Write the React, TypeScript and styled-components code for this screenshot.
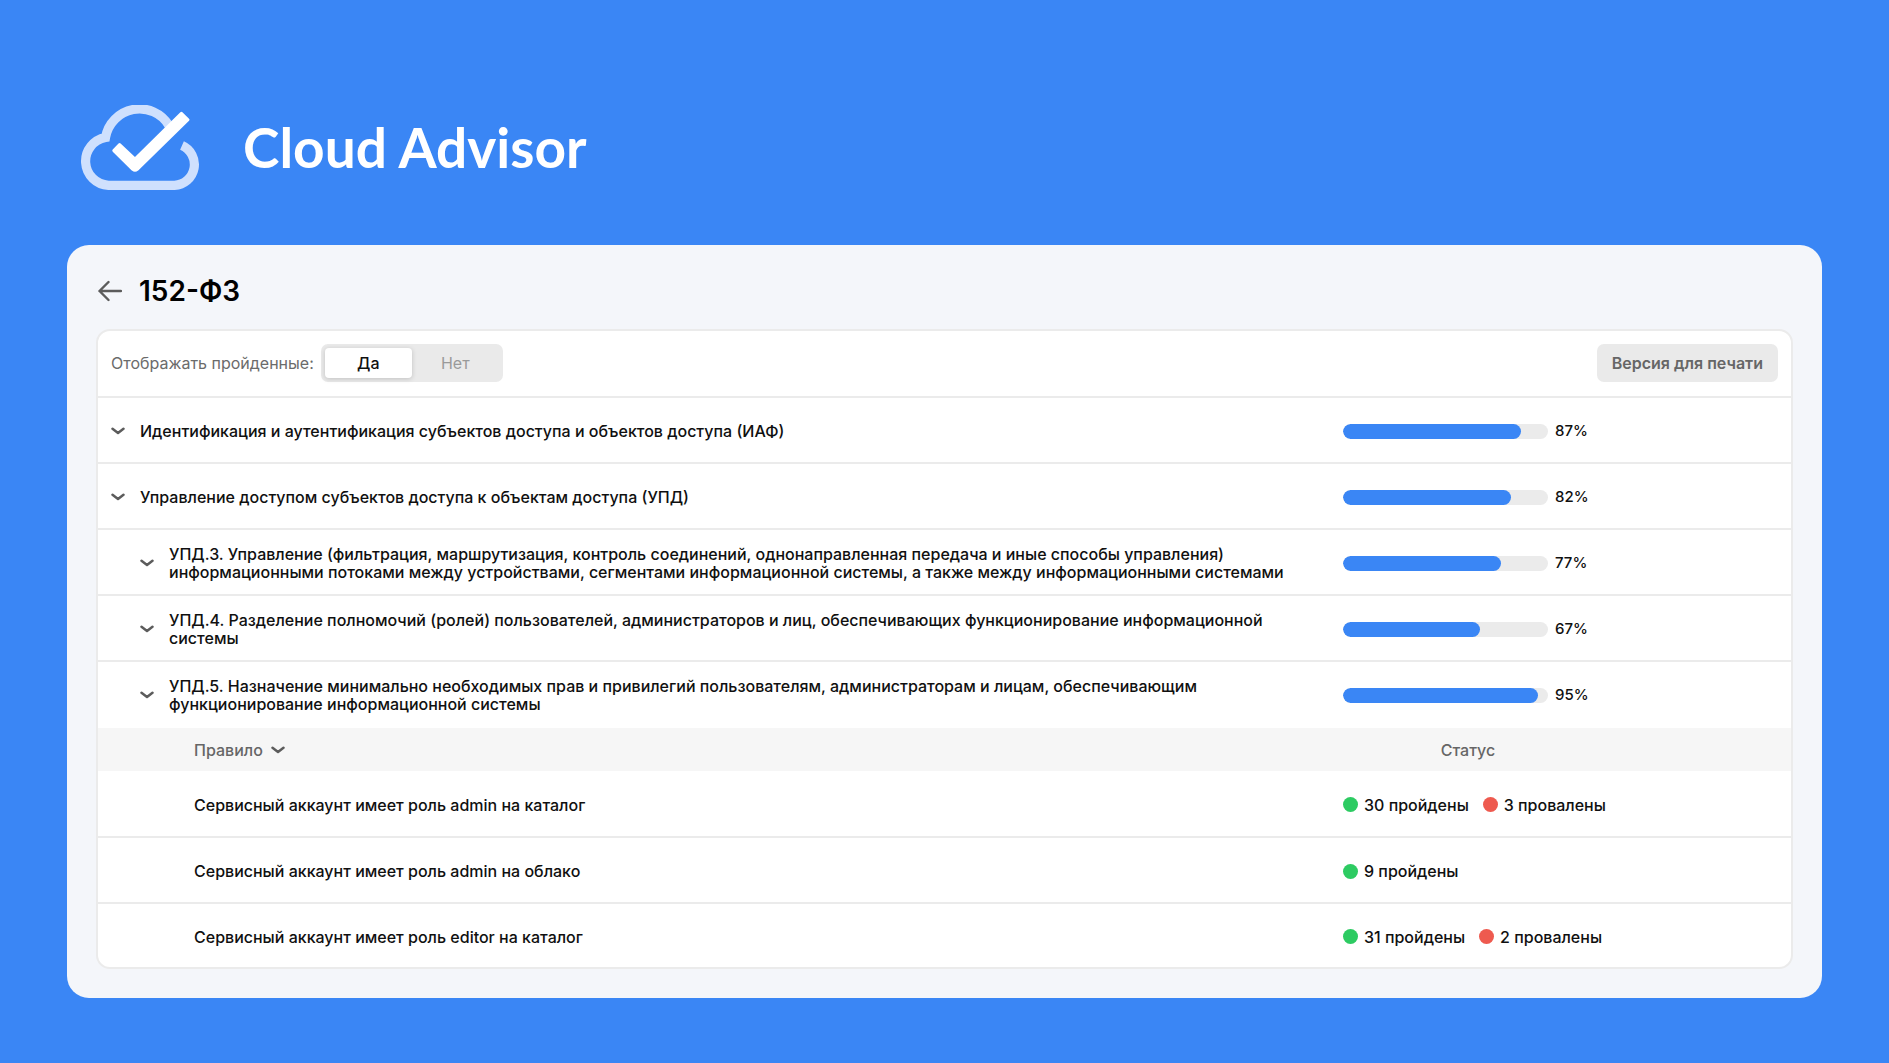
import React, { useState } from "react";
import styled, { createGlobalStyle } from "styled-components";

const GlobalStyle = createGlobalStyle`
  *, *::before, *::after { box-sizing: border-box; }
  body {
    margin: 0;
    background: #3a86f5;
    color: #101010;
    font-family: Inter, "Noto Sans", sans-serif;
    font-size: 16px;
    line-height: 18px;
  }
  button { font: inherit; color: inherit; border: 0; background: none; padding: 0; cursor: pointer; }
`;

const Page = styled.div`
  min-height: 100vh;
  padding: 105px 67px 65px;
  display: flex;
  flex-direction: column;
`;

const Brand = styled.header`
  display: flex;
  align-items: center;
  gap: 42px;
  padding-left: 13px;
  margin-bottom: 55px;
`;

const BrandName = styled.span`
  color: #fff;
  font-family: Lato, sans-serif;
  font-weight: 700;
  font-size: 55px;
  line-height: 85px;
`;

const Card = styled.main`
  background: #f4f6fa;
  border-radius: 22px;
  padding: 28px 29px 29px;
`;

const TitleBar = styled.div`
  display: flex;
  align-items: center;
  gap: 17px;
  margin-bottom: 20px;
`;

const Title = styled.h1`
  margin: 0;
  color: #000;
  font-size: 28px;
  font-weight: 600;
  line-height: 36px;
`;

const IconButton = styled.button`
  display: flex;
  align-items: center;
  justify-content: center;
  flex: none;
  color: #5c5c5c;
`;

const Panel = styled.section`
  background: #fff;
  border: 2px solid #ebebeb;
  border-radius: 14px;
  overflow: hidden;
`;

const Toolbar = styled.div`
  display: flex;
  align-items: center;
  justify-content: space-between;
  padding: 13px 13px 14px;
  border-bottom: 2px solid #ebebeb;
`;

const Filter = styled.fieldset`
  display: flex;
  align-items: center;
  gap: 7px;
  margin: 0;
  padding: 0;
  border: 0;
`;

const FilterLabel = styled.span`
  color: #6b6b6b;
`;

const Segments = styled.div`
  display: flex;
  padding: 4px;
  border-radius: 7px;
  background: #eaeaea;
`;

const Segment = styled.label<{ $active: boolean }>`
  width: 87px;
  padding: 6px 0;
  border-radius: 4px;
  text-align: center;
  cursor: pointer;
  font-weight: ${(p) => (p.$active ? 500 : 400)};
  color: ${(p) => (p.$active ? "#101010" : "#9a9a9a")};
  background: ${(p) => (p.$active ? "#fff" : "transparent")};
  box-shadow: ${(p) => (p.$active ? "0 1px 5px rgba(0, 0, 0, 0.18)" : "none")};
`;

const HiddenRadio = styled.input`
  appearance: none;
  position: absolute;
  margin: 0;
`;

const PrintButton = styled.button`
  padding: 10px 15px;
  border-radius: 7px;
  background: #eaeaea;
  color: #666;
  font-weight: 600;
`;

const Section = styled.div<{ $nested?: boolean; $last?: boolean }>`
  display: grid;
  grid-template-columns: 14px minmax(0, 1fr) 448px;
  align-items: center;
  column-gap: 15px;
  min-height: 66px;
  padding-top: 2px;
  padding-left: ${(p) => (p.$nested ? 42 : 13)}px;
  border-bottom: 2px solid ${(p) => (p.$last ? "transparent" : "#ebebeb")};
`;

const SectionTitle = styled.h2`
  margin: 0;
  padding-right: 24px;
  font-size: 16px;
  font-weight: 550;
  line-height: 18px;
`;

const Score = styled.div`
  display: flex;
  align-items: center;
  gap: 7px;
  font-size: 15px;
  font-weight: 500;
`;

const Track = styled.div`
  width: 205px;
  height: 15px;
  border-radius: 8px;
  background: #ebebeb;
  overflow: hidden;
`;

const Fill = styled.div`
  height: 100%;
  border-radius: 8px;
  background: #3a86f5;
`;

const Rules = styled.table`
  width: 100%;
  border-collapse: collapse;
  table-layout: fixed;
`;

const RuleHead = styled.th`
  height: 43px;
  padding: 0 0 0 96px;
  background: #f6f6f6;
  color: #666;
  font-weight: 500;
  text-align: left;
`;

const StatusHead = styled(RuleHead)`
  width: 448px;
  padding: 0 198px 0 0;
  text-align: center;
`;

const SortButton = styled.button`
  display: flex;
  align-items: center;
  gap: 8px;
  font-weight: 500;
`;

const RuleRow = styled.tr`
  height: 66px;
  &:not(:last-child) { border-bottom: 2px solid #ebebeb; }
  &:last-child { height: 64px; }
`;

const RuleName = styled.td`
  padding: 2px 0 0 96px;
  font-weight: 550;
`;

const StatusCell = styled.td`
  padding: 2px 0 0;
  font-weight: 450;
`;

const StatusList = styled.div`
  display: flex;
  gap: 14px;
`;

const Status = styled.span<{ $color: string }>`
  display: flex;
  align-items: center;
  gap: 6px;
  &::before {
    content: "";
    width: 15px;
    height: 15px;
    border-radius: 50%;
    background: ${(p) => p.$color};
  }
`;

const Logo = () => (
  <svg width="121" height="85" viewBox="0 0 121 85" fill="none" aria-hidden="true">
    <path
      d="M89 20.5A34.5 34.5 0 0 0 25.5 32.5A24.1 24.1 0 0 0 28.5 80.3H94.5A20.8 20.8 0 0 0 102 40.5"
      stroke="#cfe0fd"
      strokeWidth="9.2"
    />
    <path
      d="M101.4 8.4L108 14.8L57.2 64.4Q55 66.2 52.8 64.4L33.8 45.6L39.6 39.6L55 54Z"
      fill="#fff"
      stroke="#fff"
      strokeWidth="3"
      strokeLinejoin="round"
    />
  </svg>
);

const BackArrow = () => (
  <svg width="26" height="22" viewBox="0 0 26 22" fill="none" stroke="currentColor" strokeWidth="2.4" strokeLinecap="round" strokeLinejoin="round" aria-hidden="true">
    <path d="M25 11H3.5M12.5 2L3.5 11L12.5 20" />
  </svg>
);

const Chevron = () => (
  <svg width="14" height="8" viewBox="0 0 14 8" fill="none" stroke="#5c5c5c" strokeWidth="2.5" strokeLinecap="round" strokeLinejoin="round" aria-hidden="true">
    <path d="M1.5 1.8L7 6L12.5 1.8" />
  </svg>
);

const sections = [
  { title: "Идентификация и аутентификация субъектов доступа и объектов доступа (ИАФ)", score: 87 },
  { title: "Управление доступом субъектов доступа к объектам доступа (УПД)", score: 82 },
  {
    title:
      "УПД.3. Управление (фильтрация, маршрутизация, контроль соединений, однонаправленная передача и иные способы управления) информационными потоками между устройствами, сегментами информационной системы, а также между информационными системами",
    score: 77,
    nested: true,
  },
  {
    title:
      "УПД.4. Разделение полномочий (ролей) пользователей, администраторов и лиц, обеспечивающих функционирование информационной системы",
    score: 67,
    nested: true,
  },
  {
    title:
      "УПД.5. Назначение минимально необходимых прав и привилегий пользователям, администраторам и лицам, обеспечивающим функционирование информационной системы",
    score: 95,
    nested: true,
  },
];

const rules = [
  { name: "Сервисный аккаунт имеет роль admin на каталог", passed: 30, failed: 3 },
  { name: "Сервисный аккаунт имеет роль admin на облако", passed: 9, failed: 0 },
  { name: "Сервисный аккаунт имеет роль editor на каталог", passed: 31, failed: 2 },
];

export default function App() {
  const [showPassed, setShowPassed] = useState(true);

  return (
    <>
      <GlobalStyle />
      <Page>
        <Brand>
          <Logo />
          <BrandName>Cloud Advisor</BrandName>
        </Brand>
        <Card>
          <TitleBar>
            <IconButton type="button" aria-label="Назад">
              <BackArrow />
            </IconButton>
            <Title>152-ФЗ</Title>
          </TitleBar>
          <Panel>
            <Toolbar>
              <Filter aria-labelledby="passed-label">
                <FilterLabel id="passed-label">Отображать пройденные:</FilterLabel>
                <Segments>
                  <Segment $active={showPassed}>
                    <HiddenRadio type="radio" name="passed" checked={showPassed} onChange={() => setShowPassed(true)} />
                    Да
                  </Segment>
                  <Segment $active={!showPassed}>
                    <HiddenRadio type="radio" name="passed" checked={!showPassed} onChange={() => setShowPassed(false)} />
                    Нет
                  </Segment>
                </Segments>
              </Filter>
              <PrintButton type="button">Версия для печати</PrintButton>
            </Toolbar>
            {sections.map((s, i) => (
              <Section key={s.title} $nested={s.nested} $last={i === sections.length - 1}>
                <IconButton type="button" aria-label="Развернуть">
                  <Chevron />
                </IconButton>
                <SectionTitle>{s.title}</SectionTitle>
                <Score>
                  <Track role="progressbar" aria-valuenow={s.score} aria-valuemin={0} aria-valuemax={100} aria-label={s.title}>
                    <Fill style={{ width: `${s.score}%` }} />
                  </Track>
                  {s.score}%
                </Score>
              </Section>
            ))}
            <Rules>
              <thead>
                <tr>
                  <RuleHead scope="col">
                    <SortButton type="button">
                      Правило
                      <Chevron />
                    </SortButton>
                  </RuleHead>
                  <StatusHead scope="col">Статус</StatusHead>
                </tr>
              </thead>
              <tbody>
                {rules.map((r) => (
                  <RuleRow key={r.name}>
                    <RuleName>{r.name}</RuleName>
                    <StatusCell>
                      <StatusList>
                        <Status $color="#2dcb62">{r.passed} пройдены</Status>
                        {r.failed > 0 && <Status $color="#ee5a4f">{r.failed} провалены</Status>}
                      </StatusList>
                    </StatusCell>
                  </RuleRow>
                ))}
              </tbody>
            </Rules>
          </Panel>
        </Card>
      </Page>
    </>
  );
}
